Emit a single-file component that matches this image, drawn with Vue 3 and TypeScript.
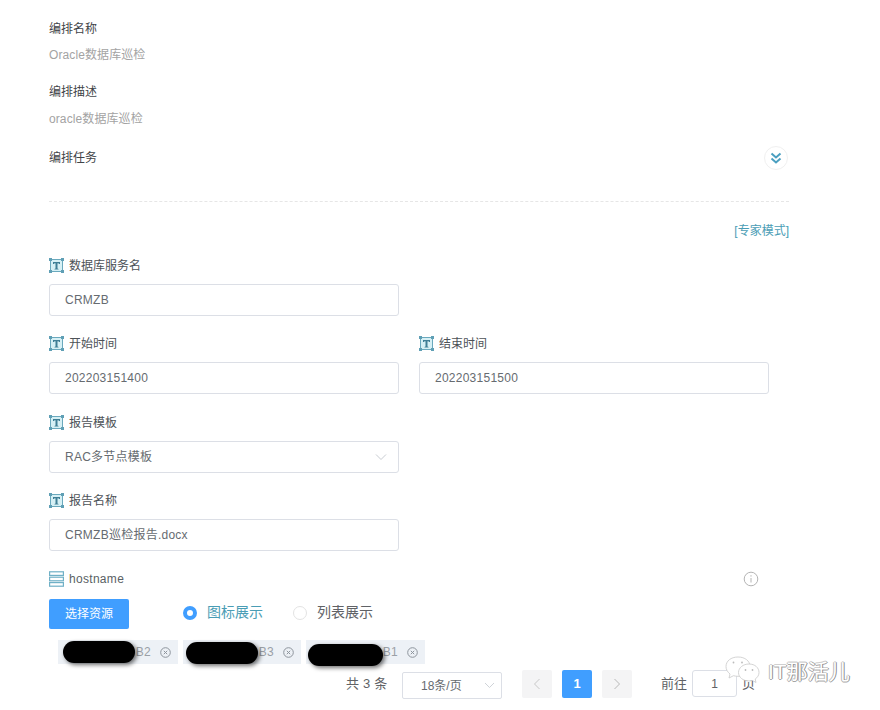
<script setup lang="ts">
interface Tag { suffix: string; width: number; blob: number; top: number; blobW: number }
const tags: Tag[] = [
  { suffix: 'B2', width: 120, blob: 5, top: 1, blobW: 72 },
  { suffix: 'B3', width: 118, blob: 3, top: 2, blobW: 72 },
  { suffix: 'B1', width: 119, blob: 2, top: 4, blobW: 75 },
]
</script>

<template>
  <div class="page">
    <div class="info-label first">编排名称</div>
    <div class="info-value">Oracle数据库巡检</div>
    <div class="info-label second">编排描述</div>
    <div class="info-value">oracle数据库巡检</div>
    <div class="task-row">
      <span class="info-label">编排任务</span>
      <span class="expand">
        <svg width="14" height="14" viewBox="0 0 14 14" fill="none" stroke="#4a9fc0" stroke-width="2">
          <path d="M2.5 2.5 7 6.5l4.5-4M2.5 7.5 7 11.5l4.500-4" />
        </svg>
      </span>
    </div>
    <div class="divider"></div>
    <div class="expert"><span>[专家模式]</span></div>

    <div class="field-label first-field"><svg class="t-icon" viewBox="0 0 15 15"><use href="#t-glyph" /></svg><span>数据库服务名</span></div>
    <div class="input">CRMZB</div>

    <div class="two-col">
      <div>
        <div class="field-label"><svg class="t-icon" viewBox="0 0 15 15"><use href="#t-glyph" /></svg><span>开始时间</span></div>
        <div class="input">202203151400</div>
      </div>
      <div>
        <div class="field-label"><svg class="t-icon" viewBox="0 0 15 15"><use href="#t-glyph" /></svg><span>结束时间</span></div>
        <div class="input">202203151500</div>
      </div>
    </div>

    <div class="field-label after-col"><svg class="t-icon" viewBox="0 0 15 15"><use href="#t-glyph" /></svg><span>报告模板</span></div>
    <div class="input select">
      RAC多节点模板
      <svg width="12" height="8" viewBox="0 0 12 8" fill="none" stroke="#c8ccd2"><path d="M1 1.5 6 6.5l5-5" /></svg>
    </div>

    <div class="field-label"><svg class="t-icon" viewBox="0 0 15 15"><use href="#t-glyph" /></svg><span>报告名称</span></div>
    <div class="input">CRMZB巡检报告.docx</div>

    <div class="host-row">
      <svg class="host-icon" width="15" height="16" viewBox="0 0 15 16" fill="none" stroke="#6fb0c6" stroke-width="1.2">
        <rect x=".6" y=".8" width="13.8" height="3.6" />
        <rect x=".6" y="6.2" width="13.8" height="3.6" />
        <rect x=".6" y="11.6" width="13.8" height="3.6" />
      </svg>
      <span>hostname</span>
      <svg class="info-icon" width="16" height="16" viewBox="0 0 16 16" fill="none" stroke="#b4b4b4">
        <circle cx="8" cy="8" r="6.8" />
        <path d="M8 7v4.5M8 4.2v1.4" />
      </svg>
    </div>

    <div class="action-row">
      <button class="primary" type="button">选择资源</button>
      <span class="radio on"></span><span class="radio-text active">图标展示</span>
      <span class="radio off"></span><span class="radio-text">列表展示</span>
    </div>

    <div class="tags">
      <div v-for="t in tags" :key="t.suffix" class="tag" :style="{ width: t.width + 'px' }">
        <span class="blob" :style="{ left: t.blob + 'px', top: t.top + 'px', width: t.blobW + 'px' }"></span>
        <span class="tag-text">{{ t.suffix }}</span>
        <svg width="11" height="11" viewBox="0 0 11 11" fill="none" stroke="#8d949c">
          <circle cx="5.5" cy="5.5" r="4.8" />
          <path d="M3.8 3.8l3.4 3.4M7.2 3.8l-3.4 3.4" />
        </svg>
      </div>
    </div>

    <div class="pager">
      <span class="total">共 3 条</span>
      <div class="size">18条/页
        <svg width="11" height="7" viewBox="0 0 11 7" fill="none" stroke="#cfd3d8"><path d="M1 1l4.5 4.5L10 1" /></svg>
      </div>
      <span class="pg-btn prev">
        <svg width="8" height="12" viewBox="0 0 8 12" fill="none" stroke="#c8c8c8"><path d="M6.5 1 1.5 6l5 5" /></svg>
      </span>
      <span class="pg-num">1</span>
      <span class="pg-btn">
        <svg width="8" height="12" viewBox="0 0 8 12" fill="none" stroke="#b8b8b8"><path d="M1.5 1l5 5-5 5" /></svg>
      </span>
      <span class="goto">前往</span>
      <span class="jump">1</span>
      <span class="unit">页</span>
    </div>

    <div class="watermark">
      <svg width="38" height="30" viewBox="0 0 38 30" fill="#fff" stroke="#c9c9c9" stroke-width=".8">
        <path d="M14 2c-7 0-12 4-12 9.500 0 3 1.500 5.500 4 7.500l-1 4 4.500-2.300c1.500.4 3 .6 4.500.6 7 0 12-4.300 12-9.800S21 2 14 2z" />
        <path d="M25 9c-6 0-10.500 3.800-10.500 8.500S19 26 25 26c1.200 0 2.400-.2 3.500-.5l3.500 2-.8-3.500c2.400-1.500 3.800-3.900 3.800-6.500C35 12.800 31 9 25 9z" />
        <circle cx="9.500" cy="7.500" r=".9" fill="#bbb" stroke="none" />
        <circle cx="18" cy="7.500" r=".9" fill="#bbb" stroke="none" />
        <circle cx="21.500" cy="15" r=".9" fill="#bbb" stroke="none" />
        <circle cx="28.500" cy="15" r=".9" fill="#bbb" stroke="none" />
      </svg>
      <span>IT那活儿</span>
    </div>

    <svg width="0" height="0" class="defs">
      <defs>
        <g id="t-glyph">
          <rect x="1.500" y="1.500" width="12" height="12" fill="#d6f0f5" stroke="#6aa9bd" />
          <rect x="0" y="0" width="3" height="3" fill="#5f9fb5" />
          <rect x="12" y="0" width="3" height="3" fill="#5f9fb5" />
          <rect x="0" y="12" width="3" height="3" fill="#5f9fb5" />
          <rect x="12" y="12" width="3" height="3" fill="#5f9fb5" />
          <path d="M4 4h7v2h-1l-.5-.8H8.500v5.300l1 .5v.5h-4v-.5l1-.5V5.200H5.500L5 6H4z" fill="#3f7f96" />
        </g>
      </defs>
    </svg>
  </div>
</template>

<style scoped>
.page {
  position: relative;
  box-sizing: border-box;
  width: 880px;
  height: 710px;
  padding-left: 49px;
  overflow: hidden;
  background: #fff;
  font-family: "Liberation Sans", "Noto Sans CJK SC", sans-serif;
  font-size: 12px;
  color: #606266;
}
.info-label { line-height: 18px; color: #3f4448; font-size: 12px; }
.info-label.first { padding-top: 20px; }
.info-label.second { margin-top: 20px; }
.info-value { margin-top: 9px; line-height: 16px; color: #a3a3a3; letter-spacing: .1px; }
.info-label.second + .info-value { margin-top: 10px; }
.task-row {
  display: flex;
  align-items: center;
  justify-content: space-between;
  width: 739px;
  height: 24px;
  margin-top: 19px;
}
.expand {
  display: flex;
  align-items: center;
  justify-content: center;
  width: 24px;
  height: 24px;
  border: 1px solid #f0f0f0;
  border-radius: 50%;
  box-sizing: border-box;
}
.divider { width: 740px; margin-top: 31px; border-top: 1px dashed #e6e6e6; }
.expert { width: 740px; margin-top: 21px; text-align: right; line-height: 16px; color: #4a9db5; }
.field-label {
  display: flex;
  align-items: center;
  gap: 5px;
  height: 16px;
  line-height: 16px;
  margin-top: 19px;
  margin-bottom: 11px;
  color: #4d5257;
}
.field-label span { padding-top: 2px; }
.after-col { margin-top: 20px; }
.first-field { margin-top: 18px; }
.t-icon { width: 15px; height: 15px; flex: none; }
.input {
  display: flex;
  align-items: center;
  justify-content: space-between;
  box-sizing: border-box;
  width: 350px;
  height: 32px;
  padding: 0 15px;
  border: 1px solid #dcdfe6;
  border-radius: 3px;
  color: #666b70;
  line-height: 16px;
  letter-spacing: .25px;
}
.two-col { display: flex; gap: 20px; }
.select svg { margin-right: -4px; }
.host-row {
  display: flex;
  align-items: center;
  gap: 5px;
  width: 710px;
  height: 16px;
  margin-top: 20px;
  color: #5a5f64;
  letter-spacing: .3px;
}
.host-icon { flex: none; }
.info-icon { margin-left: auto; }
.action-row {
  display: flex;
  align-items: center;
  height: 30px;
  margin-top: 12px;
}
.primary {
  width: 80px;
  height: 30px;
  padding: 0;
  border: 0;
  border-radius: 2px;
  background: #409eff;
  color: #fff;
  font: inherit;
  line-height: 16px;
}
.radio {
  box-sizing: border-box;
  width: 14px;
  height: 14px;
  margin-bottom: 2px;
  border-radius: 50%;
  flex: none;
}
.radio.on { margin-left: 54px; background: #fff; border: 4.500px solid #409eff; }
.radio.off { margin-left: 30px; border: 1px solid #e3e3e3; }
.radio-text { margin-left: 10px; padding-bottom: 4px; font-size: 14px; line-height: 16px; color: #606266; }
.radio-text.active { color: #4a9db5; }
.tags {
  display: flex;
  gap: 5px;
  margin: 11px 0 0 9px;
}
.tag {
  position: relative;
  display: flex;
  align-items: center;
  justify-content: flex-end;
  gap: 9px;
  box-sizing: border-box;
  height: 24px;
  padding-right: 7px;
  background: #edf1f6;
  color: #9aa0a6;
}
.tag-text { letter-spacing: .3px; }
.blob {
  position: absolute;
  height: 22px;
  border-radius: 11px;
  background: #000;
  box-shadow: 2px 2px 4px rgba(0, 0, 0, .55);
}
.pager {
  display: flex;
  align-items: flex-start;
  height: 30px;
  margin-top: 6px;
  padding-left: 297px;
  font-size: 13px;
  line-height: 28px;
  color: #606266;
}
.total { width: 41px; white-space: nowrap; letter-spacing: .2px; }
.size {
  display: flex;
  align-items: center;
  justify-content: space-between;
  box-sizing: border-box;
  width: 100px;
  height: 27px;
  margin: 2px 0 0 15px;
  padding: 0 6px 0 18px;
  border: 1px solid #dcdfe6;
  border-radius: 2px;
  font-size: 12px;
  line-height: 16px;
  color: #666b70;
}
.pg-btn, .pg-num {
  display: flex;
  align-items: center;
  justify-content: center;
  width: 30px;
  height: 28px;
  margin-left: 10px;
  border-radius: 2px;
  background: #f4f4f5;
}
.pg-btn.prev { margin-left: 20px; }
.pg-num { background: #409eff; color: #fff; font-weight: 700; font-size: 13px; }
.goto { margin-left: 29px; width: 26px; white-space: nowrap; }
.jump {
  display: flex;
  align-items: center;
  justify-content: center;
  box-sizing: border-box;
  width: 45px;
  height: 27px;
  margin-left: 5px;
  border: 1px solid #dcdfe6;
  border-radius: 3px;
  font-size: 12px;
}
.unit { margin-left: 5px; }
.watermark {
  position: absolute;
  left: 724px;
  top: 655px;
  display: flex;
  align-items: center;
  gap: 6px;
  pointer-events: none;
}
.watermark span {
  font-size: 21px;
  color: #fff;
  text-shadow: 1px 0 0 #8e8e8e, 0 1px 0 #a6a6a6, -1px 0 0 #bdbdbd, 0 -1px 0 #d0d0d0;
  white-space: nowrap;
}
.defs { position: absolute; }
</style>
